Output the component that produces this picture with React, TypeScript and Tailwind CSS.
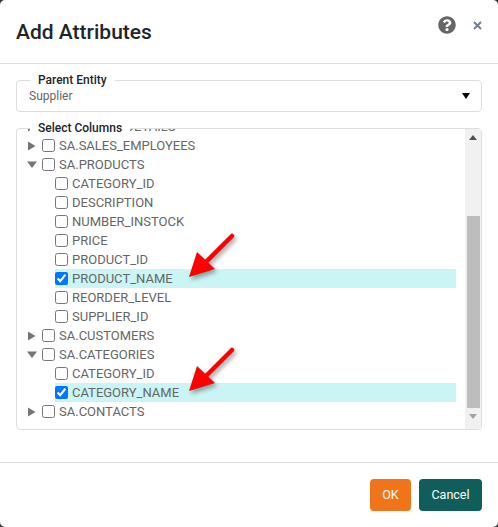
import { FaQuestionCircle } from "react-icons/fa";

type Row = { label: string; level: 0 | 1; caret?: "right" | "down"; checked?: boolean };

const rows: Row[] = [
  { label: "SA.ORDER_DETAILS", level: 0, caret: "right" },
  { label: "SA.SALES_EMPLOYEES", level: 0, caret: "right" },
  { label: "SA.PRODUCTS", level: 0, caret: "down" },
  { label: "CATEGORY_ID", level: 1 },
  { label: "DESCRIPTION", level: 1 },
  { label: "NUMBER_INSTOCK", level: 1 },
  { label: "PRICE", level: 1 },
  { label: "PRODUCT_ID", level: 1 },
  { label: "PRODUCT_NAME", level: 1, checked: true },
  { label: "REORDER_LEVEL", level: 1 },
  { label: "SUPPLIER_ID", level: 1 },
  { label: "SA.CUSTOMERS", level: 0, caret: "right" },
  { label: "SA.CATEGORIES", level: 0, caret: "down" },
  { label: "CATEGORY_ID", level: 1 },
  { label: "CATEGORY_NAME", level: 1, checked: true },
  { label: "SA.CONTACTS", level: 0, caret: "right" },
];

function Caret({ dir }: { dir: "right" | "down" }) {
  return (
    <svg width="10" height="10" viewBox="0 0 10 10" className="shrink-0 text-[#757575]">
      {dir === "right" ? (
        <path d="M1 0.5 L8.5 5 L1 9.5 Z" fill="currentColor" />
      ) : (
        <path d="M0 1.5 L10 1.5 L5 8 Z" fill="currentColor" />
      )}
    </svg>
  );
}

function TreeRow({ row }: { row: Row }) {
  if (row.level === 1) {
    return (
      <div className={`ml-[38px] flex h-[19px] items-center gap-[4px] ${row.checked ? "bg-[#caf5f4]" : ""}`}>
        <input type="checkbox" readOnly checked={!!row.checked} className="h-[13px] w-[13px] shrink-0" />
        <span>{row.label}</span>
      </div>
    );
  }
  return (
    <div className="ml-[10px] flex h-[19px] items-center">
      <Caret dir={row.caret ?? "right"} />
      <input type="checkbox" readOnly className="ml-[5px] h-[13px] w-[13px] shrink-0" />
      <span className="ml-[4px]">{row.label}</span>
    </div>
  );
}

function Arrow({ className }: { className: string }) {
  return (
    <svg
      width="60"
      height="60"
      viewBox="0 0 60 60"
      className={`pointer-events-none absolute drop-shadow-[2px_3px_2px_rgba(0,0,0,0.35)] ${className}`}
    >
      <path d="M48 8 L14 42" stroke="#fe0000" strokeWidth="4.5" strokeLinecap="round" fill="none" />
      <path d="M5 49 L13 24 L31 41 Z" fill="#fe0000" />
    </svg>
  );
}

export default function App() {
  return (
    <div className="h-[527px] w-[498px] bg-[#333333] font-['Roboto',sans-serif]">
      <div className="relative flex h-full flex-col rounded-[5px] bg-white">
        <header className="flex h-[64px] shrink-0 items-start justify-between border-b border-[#dedede] pl-4 pr-[16px]">
          <h1 className="mt-[19px] text-[21px] font-medium leading-[26px] text-[#212529]">Add Attributes</h1>
          <div className="mt-[16px] flex items-center gap-[17px]">
            <FaQuestionCircle className="h-[18px] w-[18px] text-[#666666]" />
            <svg width="9" height="9" viewBox="0 0 9 9">
              <path d="M1 1 L8 8 M8 1 L1 8" stroke="#708090" strokeWidth="2" />
            </svg>
          </div>
        </header>

        <main className="flex flex-1 flex-col gap-[16px] px-4 pt-[16px]">
          <div className="relative flex h-[32px] items-center justify-between rounded-[4px] border border-[#dedede] pl-[12px] pr-[11px] text-[12px] text-[#666666]">
            <span className="absolute left-[13px] top-[-9px] bg-white px-[8px] text-[12px] font-medium leading-[16px] text-[#212529]">
              Parent Entity
            </span>
            <span>Supplier</span>
            <svg width="8" height="6" viewBox="0 0 8 6">
              <path d="M0 0 H8 L4 6 Z" fill="#000000" />
            </svg>
          </div>

          <div className="relative flex h-[302px] rounded-[4px] border border-[#dedede] text-[13px] text-[#666666]">
            <span className="absolute left-[13px] top-[-9px] z-10 bg-white px-[8px] text-[12px] font-medium leading-[16px] text-[#212529]">
              Select Columns
            </span>
            <div className="min-w-0 flex-1 overflow-hidden">
              <div className="mt-[-12px] mr-[9px]">
                {rows.map((r, i) => (
                  <TreeRow key={i} row={r} />
                ))}
              </div>
            </div>
            <div className="flex w-[16px] shrink-0 flex-col items-center bg-[#f1f1f1]">
              <svg width="8" height="5" viewBox="0 0 8 5" className="mt-[6px]">
                <path d="M0 5 H8 L4 0 Z" fill="#505050" />
              </svg>
              <div className="mt-[76px] h-[192px] w-[13px] bg-[#bdbdbd]" />
              <svg width="8" height="5" viewBox="0 0 8 5" className="mt-[6px]">
                <path d="M0 0 H8 L4 5 Z" fill="#a3a3a3" />
              </svg>
            </div>
          </div>
        </main>

        <footer className="flex h-[65px] shrink-0 items-start justify-end gap-[8px] border-t border-[#dedede] pr-4 pt-[16px]">
          <button className="h-[32px] w-[41px] rounded-[4px] bg-[#f0741a] text-[12.5px] font-normal text-white">OK</button>
          <button className="h-[32px] w-[63px] rounded-[4px] bg-[#0f5e5b] text-[12.5px] font-normal text-white">Cancel</button>
        </footer>

        <Arrow className="left-[184px] top-[228px]" />
        <Arrow className="left-[184px] top-[342px]" />
      </div>
    </div>
  );
}
